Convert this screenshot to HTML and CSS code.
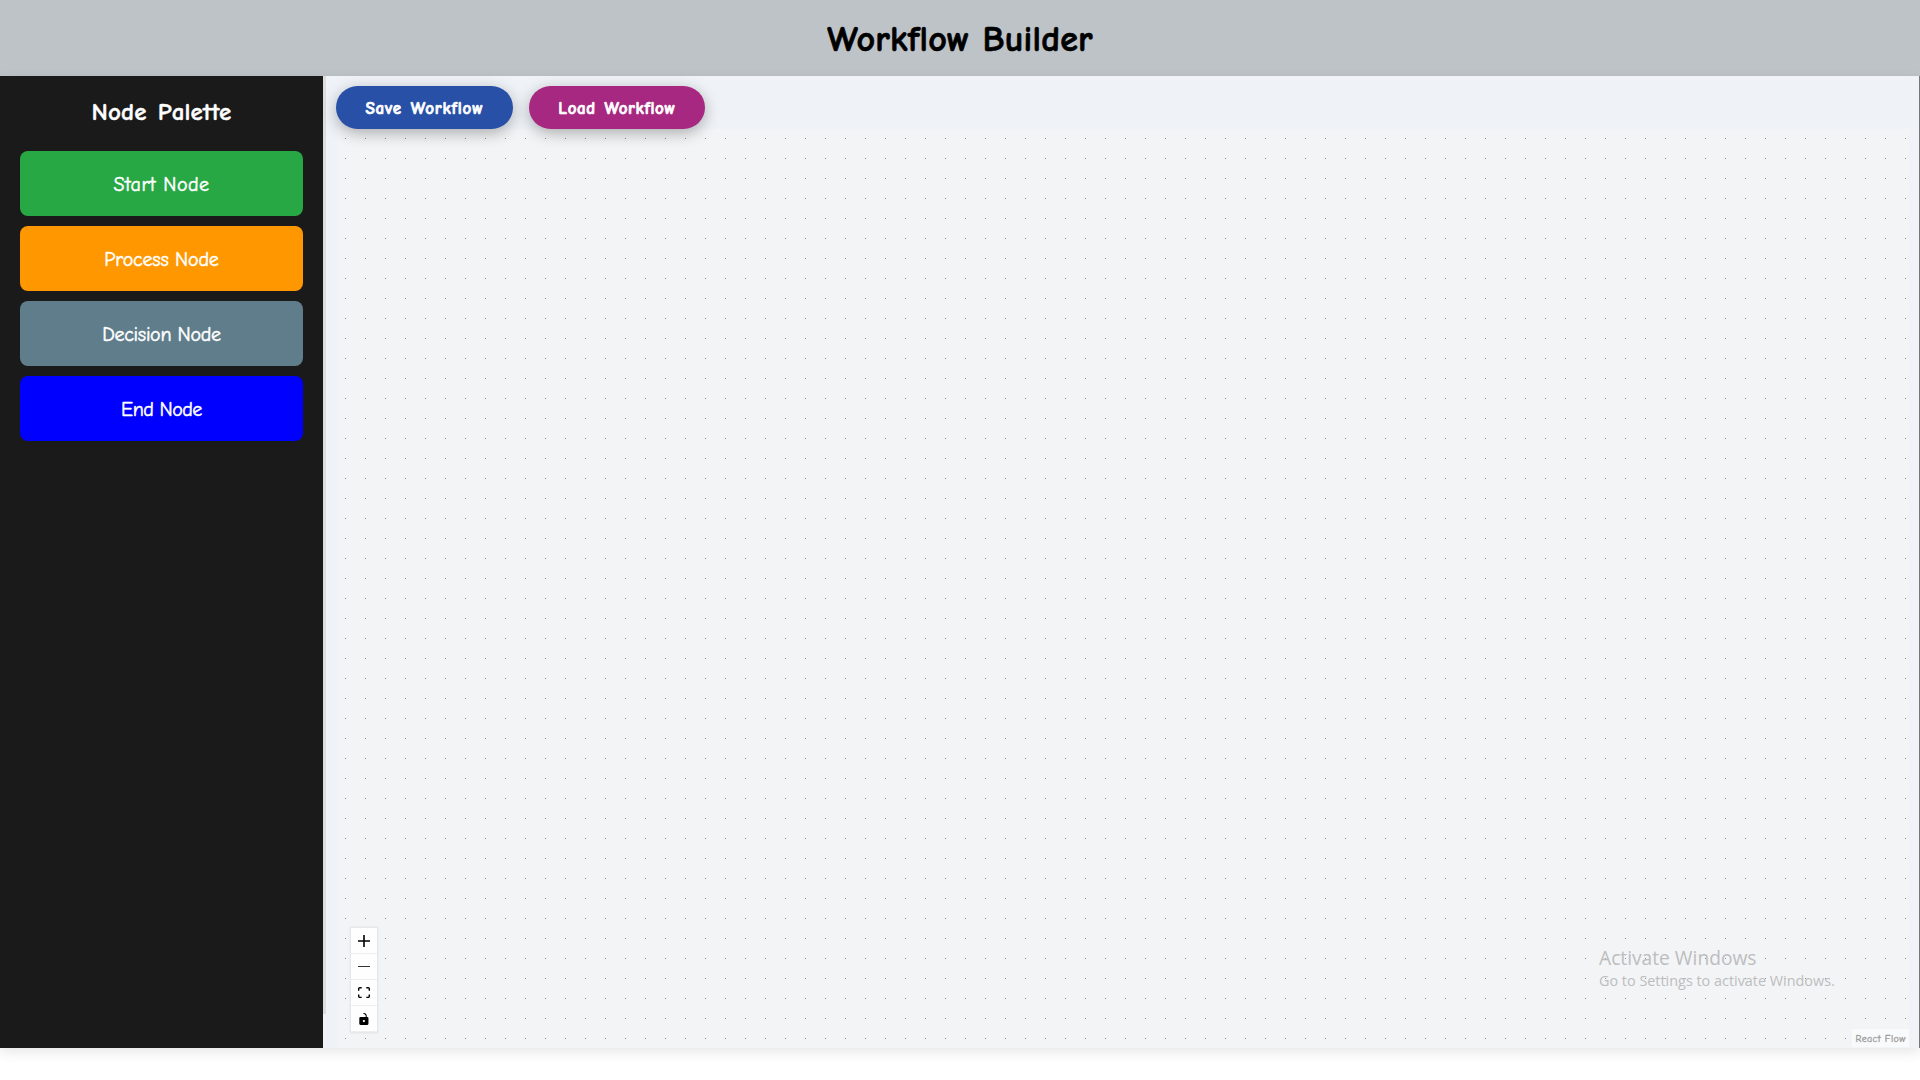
FILE: index.html
```html
<!DOCTYPE html>
<html lang="en">
<head>
<meta charset="utf-8">
<title>Workflow Builder</title>
<link rel="stylesheet" href="styles.css">
</head>
<body>
<header class="header"><h1 class="title">Workflow Builder</h1></header>
<div class="builder">
  <aside class="palette">
    <h2 class="palette-title">Node Palette</h2>
    <div class="palette-node start">Start Node</div>
    <div class="palette-node process">Process Node</div>
    <div class="palette-node decision">Decision Node</div>
    <div class="palette-node end">End Node</div>
  </aside>
  <main class="workspace">
    <div class="divider"></div>
    <div class="toolbar">
      <button class="action save">Save Workflow</button>
      <button class="action load">Load Workflow</button>
    </div>
    <div class="flow">
      <div class="controls">
        <button class="control" aria-label="Zoom in"><svg viewBox="0 0 32 32"><path d="M32 18.133H18.133V32h-4.266V18.133H0v-4.266h13.867V0h4.266v13.867H32z"/></svg></button>
        <button class="control zoom-out" aria-label="Zoom out"><svg viewBox="0 0 32 5"><path d="M0 0h32v4.2H0z"/></svg></button>
        <button class="control" aria-label="Fit view"><svg viewBox="0 0 32 30"><path d="M3.692 4.63c0-.53.4-.938.939-.938h5.215V0H4.708C2.13 0 0 2.054 0 4.63v5.216h3.692V4.631zM27.354 0h-5.2v3.692h5.17c.53 0 .984.4.984.939v5.215H32V4.631A4.624 4.624 0 0027.354 0zm.954 24.83c0 .532-.4.94-.939.94h-5.215v3.768h5.215c2.577 0 4.631-2.13 4.631-4.707v-5.139h-3.692v5.139zm-23.677.94a.919.919 0 01-.939-.94v-5.138H0v5.139c0 2.577 2.13 4.707 4.708 4.707h5.138V25.77H4.631z"/></svg></button>
        <button class="control" aria-label="Toggle interactivity"><svg viewBox="0 0 25 32"><path d="M21.333 10.667H19.81V7.619C19.81 3.429 16.38 0 12.19 0c-4.114 1.828-1.37 2.133.305 2.438 1.676.305 4.42 2.59 4.42 5.181v3.048H3.047A3.056 3.056 0 000 13.714v15.238A3.056 3.056 0 003.048 32h18.285a3.056 3.056 0 003.048-3.048V13.714a3.056 3.056 0 00-3.048-3.047zM12.19 24.533a3.056 3.056 0 01-3.047-3.047 3.056 3.056 0 013.047-3.048 3.056 3.056 0 013.048 3.048 3.056 3.056 0 01-3.048 3.047z"/></svg></button>
      </div>
      <a class="attribution">React Flow</a>
    </div>
  </main>
</div>
<div class="watermark"><div class="watermark-title">Activate Windows</div><div class="watermark-text">Go to Settings to activate Windows.</div></div>
</body>
</html>
```
FILE: styles.css
```css
* { box-sizing: border-box; }
body {
  margin: 0;
  height: 1080px;
  overflow: hidden;
  background: #fff;
  font-family: "Comic Sans MS", "Comic Neue", Lato, sans-serif;
}
h1, h2 { margin: 0; }
button { font: inherit; border: 0; padding: 0; }
.header {
  height: 76px;
  display: flex;
  justify-content: center;
  padding-top: 20px;
  background: #bdc3c7;
}
.title {
  font-size: 36px;
  line-height: 40px;
  letter-spacing: 0.2px;
  color: #000;
  white-space: nowrap;
  -webkit-text-stroke: 0.7px;
}
.builder {
  display: flex;
  height: 972px;
  box-shadow: 0 4px 12px rgba(0, 0, 0, 0.1);
}
.palette {
  width: 323px;
  padding: 20px;
  display: flex;
  flex-direction: column;
  gap: 10px;
  background: #1a1a1a;
  color: #fff;
  text-align: center;
}
.palette-title {
  height: 45px;
  font-size: 25px;
  line-height: 32px;
  letter-spacing: 0.15px;
  word-spacing: 2px;
  white-space: nowrap;
  -webkit-text-stroke: 0.4px;
}
.palette-node {
  height: 65px;
  padding-top: 1px;
  line-height: 65px;
  border-radius: 8px;
  font-size: 20px;
  white-space: nowrap;
  -webkit-text-stroke: 0.5px;
}
.start { background: #28a745; letter-spacing: 0.5px; }
.process { background: #ff9800; letter-spacing: -0.2px; }
.decision { background: #607d8b; letter-spacing: -0.3px; }
.end { background: #00f; letter-spacing: -0.5px; }
.workspace {
  flex: 1;
  display: grid;
  grid-template: 53px 1fr / 3px 1fr;
  border-right: 1px solid #777;
  background: #eff3f8;
}
.divider { grid-row: 1 / 3; height: 938px; background: #ddd; }
.toolbar { display: flex; gap: 16px; padding: 10px 0 0 10px; z-index: 1; }
.action {
  width: 177px;
  height: 43px;
  padding-top: 2px;
  border-radius: 22px;
  color: #fff;
  font-size: 17px;
  font-weight: 700;
  letter-spacing: 0.8px;
  word-spacing: 2px;
  white-space: nowrap;
  -webkit-text-stroke: 0.7px;
  box-shadow: 0 4px 15px rgba(0, 0, 0, 0.3);
}
.save { background: #2850a7; }
.load { width: 176px; background: #a72880; letter-spacing: 0.6px; }
/* Dotted canvas: one 1px dot per 20px tile */
.flow {
  margin: 0 10px 0 11px;
  display: flex;
  justify-content: space-between;
  align-items: flex-end;
  background-color: #f3f4f6;
  background-image: conic-gradient(from 0deg at 1px 1px, transparent 270deg, #8c8c8e 0);
  background-size: 20px 20px;
  background-position: 8px 9px;
}
.controls { width: 26px; margin: 0 0 16px 14px; box-shadow: 0 0 2px 1px rgba(0, 0, 0, 0.08); }
.control {
  width: 26px;
  height: 26px;
  display: flex;
  align-items: center;
  justify-content: center;
  background: #fefefe;
  border-bottom: 1px solid #eee;
}
.control svg { width: 12px; max-height: 12px; }
.zoom-out svg { fill: #333; }
.attribution {
  width: 57px;
  height: 18px;
  margin-bottom: 1px;
  background: rgba(255, 255, 255, 0.5);
  color: #999;
  font-size: 10px;
  line-height: 20px;
  text-align: center;
  letter-spacing: 0.4px;
  white-space: nowrap;
  -webkit-text-stroke: 0.3px;
}
.watermark {
  position: absolute;
  left: 1599px;
  top: 945px;
  color: #bdbdbf;
  font-family: "Segoe UI", "Open Sans", sans-serif;
  white-space: nowrap;
}
.watermark-title { font-size: 19.2px; line-height: 26px; }
.watermark-text { font-size: 14.4px; line-height: 20px; }
```
